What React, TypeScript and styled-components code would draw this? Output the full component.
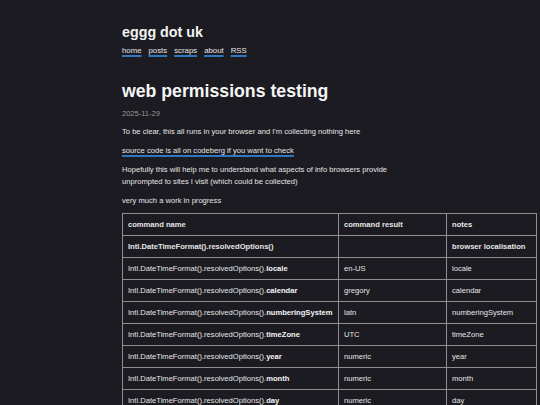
import React from "react";
import styled, { createGlobalStyle } from "styled-components";

const Global = createGlobalStyle`
  html, body { margin: 0; padding: 0; background: #1b1b21; }
  body { font-family: "Liberation Sans", Arial, sans-serif; color: #e6e6e6; }
`;

const Page = styled.div`
  width: 296px;
  margin: 0 auto;
  padding-top: 23px;
`;

const SiteTitle = styled.div`
  font-size: 14.3px;
  font-weight: bold;
  color: #f2f2f2;
  line-height: 18px;
`;

const Nav = styled.nav`
  display: flex;
  gap: 7px;
  margin-top: 5px;
  font-size: 7.8px;
  line-height: 10px;
`;

const Link = styled.a`
  color: #e6e6e6;
  text-decoration: underline;
  text-decoration-color: #2c77c0;
  text-decoration-thickness: 1.5px;
  text-underline-offset: 1.5px;
`;

const Heading = styled.h1`
  font-size: 17.7px;
  font-weight: bold;
  color: #f5f5f5;
  margin: 24px 0 0;
  line-height: 22px;
`;

const DateLine = styled.div`
  font-size: 7.5px;
  color: #9a9a9a;
  margin-top: 7px;
  line-height: 10px;
`;

const Para = styled.p`
  font-size: 7.6px;
  line-height: 12px;
  margin: 7px 0 0;
`;

const Table = styled.table`
  border-collapse: collapse;
  width: 414px;
  table-layout: fixed;
  margin-top: 6px;
  font-size: 7.6px;
`;

const Cell = styled.td<{ $bold?: boolean }>`
  border: 1px solid #8f8f8f;
  height: 21px;
  padding: 0 0 0 5px;
  white-space: nowrap;
  font-weight: ${(p) => (p.$bold ? "bold" : "normal")};
  color: #e6e6e6;
  line-height: 10px;
`;

const B = styled.b`
  font-weight: bold;
  color: #f5f5f5;
`;

const rows: [string, string, string][] = [
  ["locale", "en-US", "locale"],
  ["calendar", "gregory", "calendar"],
  ["numberingSystem", "latn", "numberingSystem"],
  ["timeZone", "UTC", "timeZone"],
  ["year", "numeric", "year"],
  ["month", "numeric", "month"],
  ["day", "numeric", "day"],
];

export default function App() {
  return (
    <>
      <Global />
      <Page>
        <SiteTitle>eggg dot uk</SiteTitle>
        <Nav>
          <Link href="#">home</Link>
          <Link href="#">posts</Link>
          <Link href="#">scraps</Link>
          <Link href="#">about</Link>
          <Link href="#">RSS</Link>
        </Nav>
        <Heading>web permissions testing</Heading>
        <DateLine>2025-11-29</DateLine>
        <Para>To be clear, this all runs in your browser and I'm collecting nothing here</Para>
        <Para>
          <Link href="#">source code is all on codeberg if you want to check</Link>
        </Para>
        <Para>
          Hopefully this will help me to understand what aspects of info browsers provide unprompted to sites I
          visit (which could be collected)
        </Para>
        <Para>very much a work in progress</Para>
        <Table>
          <colgroup>
            <col style={{ width: 216 }} />
            <col style={{ width: 108 }} />
            <col style={{ width: 90 }} />
          </colgroup>
          <tbody>
            <tr>
              <Cell $bold>command name</Cell>
              <Cell $bold>command result</Cell>
              <Cell $bold>notes</Cell>
            </tr>
            <tr>
              <Cell $bold>Intl.DateTimeFormat().resolvedOptions()</Cell>
              <Cell></Cell>
              <Cell $bold>browser localisation</Cell>
            </tr>
            {rows.map(([k, v, n]) => (
              <tr key={k}>
                <Cell>
                  Intl.DateTimeFormat().resolvedOptions().<B>{k}</B>
                </Cell>
                <Cell>{v}</Cell>
                <Cell>{n}</Cell>
              </tr>
            ))}
          </tbody>
        </Table>
      </Page>
    </>
  );
}
